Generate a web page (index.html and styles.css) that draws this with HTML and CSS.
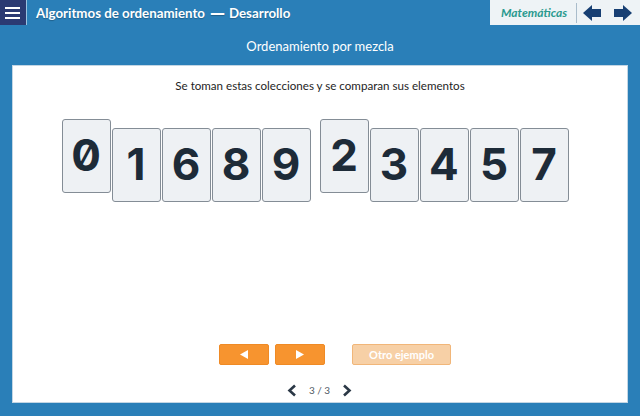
FILE: index.html
```html
<!DOCTYPE html>
<html lang="es">
<head>
<meta charset="utf-8">
<title>Algoritmos de ordenamiento</title>
<link rel="stylesheet" href="styles.css">
</head>
<body>
<header class="topbar">
  <button class="menu-btn" aria-label="Menú">
    <span class="bar"></span><span class="bar"></span><span class="bar"></span>
  </button>
  <h1 class="title">Algoritmos de ordenamiento<span class="dash">—</span>Desarrollo</h1>
  <div class="tab">
    <span class="subject">Matemáticas</span>
    <span class="sep"></span>
    <svg class="nav-arrow" width="18" height="16" viewBox="0 0 18 16"><path d="M0 8 L9 0 V4 H18 V12 H9 V16 Z" fill="#173f73"/></svg>
    <svg class="nav-arrow last" width="18" height="16" viewBox="0 0 18 16"><path d="M18 8 L9 0 V4 H0 V12 H9 V16 Z" fill="#173f73"/></svg>
  </div>
</header>
<div class="subtitle">Ordenamiento por mezcla</div>
<main class="panel">
  <p class="instruction">Se toman estas colecciones y se comparan sus elementos</p>
  <div class="cards">
    <div class="group">
      <div class="card up">0</div>
      <div class="card">1</div>
      <div class="card">6</div>
      <div class="card">8</div>
      <div class="card">9</div>
    </div>
    <div class="group">
      <div class="card up">2</div>
      <div class="card">3</div>
      <div class="card">4</div>
      <div class="card">5</div>
      <div class="card">7</div>
    </div>
  </div>
  <div class="controls">
    <button class="btn step"><svg width="8" height="9" viewBox="0 0 8 9"><path d="M0 4.5 L8 0 V9 Z" fill="#fff"/></svg></button>
    <button class="btn step"><svg width="8" height="9" viewBox="0 0 8 9"><path d="M8 4.5 L0 0 V9 Z" fill="#fff"/></svg></button>
    <button class="btn other">Otro ejemplo</button>
  </div>
  <nav class="pager">
    <svg class="chev" width="10" height="13" viewBox="0 0 10 13"><path d="M8 1.5 L2.5 6.5 L8 11.5" fill="none" stroke="#2b3846" stroke-width="2.6"/></svg>
    <span class="count">3 / 3</span>
    <svg class="chev" width="10" height="13" viewBox="0 0 10 13"><path d="M2 1.5 L7.5 6.5 L2 11.5" fill="none" stroke="#2b3846" stroke-width="2.6"/></svg>
  </nav>
</main>
</body>
</html>
```
FILE: styles.css
```css
* { box-sizing: border-box; }
html, body { margin: 0; padding: 0; }
body {
  width: 640px;
  height: 416px;
  background: #2a7fb8;
  font-family: "Lato", "Open Sans", sans-serif;
  overflow: hidden;
}
.topbar {
  display: flex;
  align-items: center;
  height: 25px;
}
.menu-btn {
  width: 27px;
  height: 25px;
  margin: 0;
  padding: 0 0 0 5px;
  border: none;
  border-right: 1px solid #9cc3e0;
  background: #2b3a72;
  display: flex;
  flex-direction: column;
  justify-content: center;
  gap: 3px;
  flex-shrink: 0;
}
.bar {
  display: block;
  width: 15px;
  height: 2px;
  background: #fff;
}
.title {
  margin: 0 0 0 9px;
  font-size: 13.3px;
  font-weight: 700;
  color: #fff;
  white-space: nowrap;
  text-shadow: 0 1px 1px rgba(0,0,0,0.25);
}
.dash {
  font-family: "DejaVu Sans", sans-serif;
  font-size: 15px;
  margin: 0 4px 0 5px;
}
.tab {
  margin-left: auto;
  width: 150px;
  height: 25px;
  background: #eef3f6;
  display: flex;
  align-items: center;
  padding-left: 11px;
  flex-shrink: 0;
}
.subject {
  font-style: italic;
  font-weight: 700;
  font-size: 12px;
  color: #2a9a8f;
  flex-shrink: 0;
}
.sep {
  width: 1px;
  height: 20px;
  background: #a9bccb;
  margin: 0 6px 0 9px;
  flex-shrink: 0;
}
.nav-arrow { margin-right: 13px; display: block; flex-shrink: 0; }
.nav-arrow.last { margin-right: 0; }
.subtitle {
  height: 40px;
  line-height: 42px;
  text-align: center;
  color: #fff;
  font-size: 13px;
}
.panel {
  margin: 0 12px;
  height: 338px;
  background: #fff;
  border: 1px solid #c3d6e4;
  display: flex;
  flex-direction: column;
  align-items: center;
}
.instruction {
  margin: 12px 0 0;
  line-height: 16px;
  font-size: 11.6px;
  color: #1e1e1e;
}
.cards {
  margin-top: 25px;
  margin-right: 10px;
  display: flex;
  gap: 9px;
  align-items: flex-start;
}
.group {
  display: flex;
  gap: 1px;
  align-items: flex-start;
}
.card {
  width: 49px;
  height: 74px;
  margin-top: 9px;
  background: #eef1f4;
  border: 1px solid #848d96;
  border-radius: 3px;
  display: flex;
  align-items: center;
  justify-content: center;
  font-family: "Inter", "Open Sans", sans-serif;
  font-feature-settings: "zero" 1;
  font-weight: 700;
  font-size: 44px;
  color: #1d2b38;
  padding-bottom: 2px;
}
.card.up { margin-top: 0; }
.controls {
  margin-top: auto;
  display: flex;
  gap: 6px;
  margin-left: 30px;
}
.btn {
  height: 21px;
  margin: 0;
  padding: 0;
  border-radius: 2px;
  display: flex;
  align-items: center;
  justify-content: center;
  font-family: "Lato", sans-serif;
}
.btn.step {
  width: 50px;
  background: #f7942f;
  border: 1px solid #ef8a25;
}
.btn.other {
  width: 99px;
  margin-left: 21px;
  background: #f7d0a6;
  border: 1px solid #f1b679;
  color: #fff;
  font-size: 11px;
  font-weight: 700;
}
.pager {
  margin-top: 14px;
  margin-bottom: 1px;
  height: 22px;
  display: flex;
  align-items: center;
  gap: 12px;
  margin-right: 1px;
}
.chev { display: block; }
.count {
  font-size: 10px;
  color: #505a64;
}
```
